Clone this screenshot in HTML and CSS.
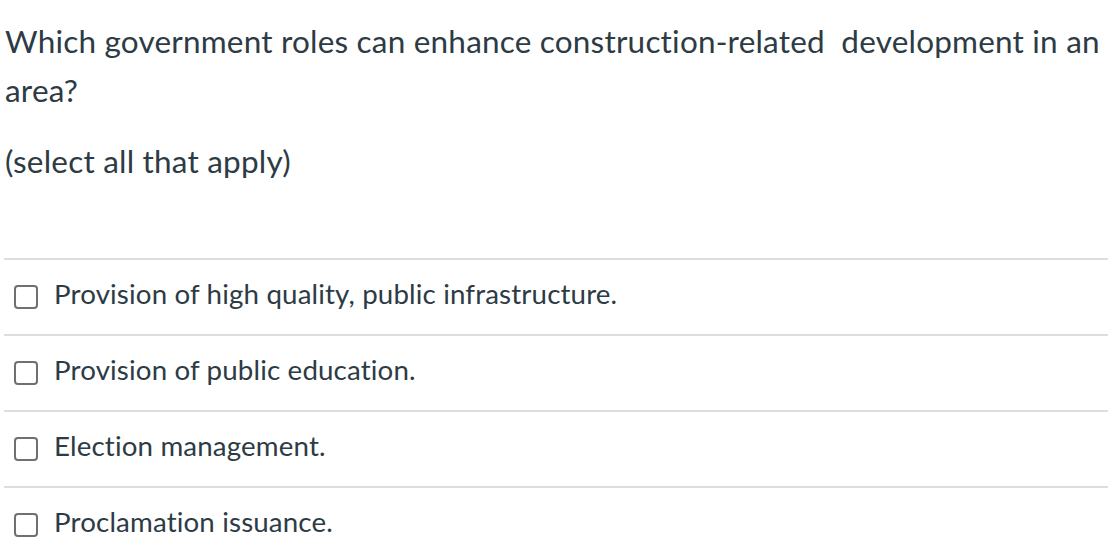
FILE: index.html
```html
<!DOCTYPE html>
<html>
<head>
<meta charset="utf-8">
<link rel="stylesheet" href="styles.css">
</head>
<body>
<div class="question">
  <div class="question-text">
    <p class="stem">Which government roles can enhance construction-related&nbsp; development in an area?</p>
    <p class="hint">(select all that apply)</p>
  </div>
  <div class="answers">
    <label class="answer"><span class="box"></span><span class="label">Provision of high quality, public infrastructure.</span></label>
    <label class="answer"><span class="box"></span><span class="label">Provision of public education.</span></label>
    <label class="answer"><span class="box"></span><span class="label">Election management.</span></label>
    <label class="answer"><span class="box"></span><span class="label">Proclamation issuance.</span></label>
  </div>
</div>
</body>
</html>
```

FILE: styles.css
```css
html, body {
  margin: 0;
  padding: 0;
  background: #ffffff;
}
body {
  font-family: Lato, "Open Sans", sans-serif;
  color: #2d3b45;
  overflow: hidden;
}
.question {
  padding: 17px 0 0 4px;
}
.question-text p {
  margin: 0;
  font-size: 31.5px;
  line-height: 49px;
  letter-spacing: 0.2px;
  padding-left: 1px;
}
.question-text .hint {
  margin-top: 22px;
}
.answers {
  margin-top: 72px;
}
.answer {
  display: flex;
  align-items: center;
  height: 74px;
  border-top: 2px solid #dddddd;
  padding-left: 10px;
  gap: 16px;
}
.box {
  width: 20px;
  height: 20px;
  border: 2px solid #707070;
  border-radius: 4px;
  flex: none;
}
.label {
  font-size: 27.7px;
  line-height: 32px;
  letter-spacing: 0.15px;
  padding-bottom: 7px;
}
```
